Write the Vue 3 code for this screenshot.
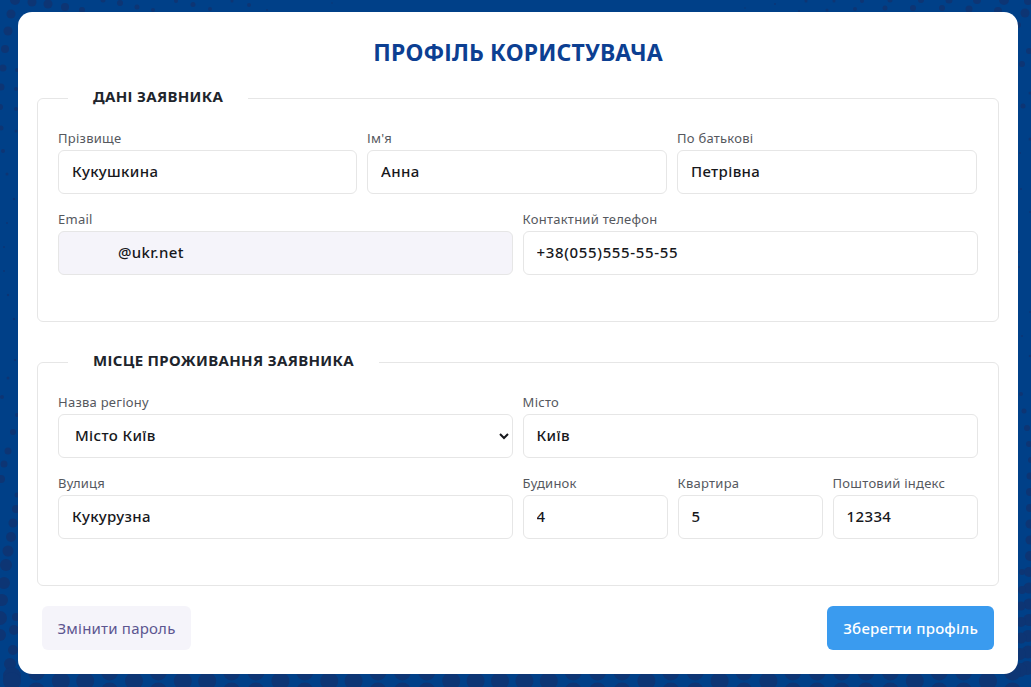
<script setup>
const raw = [
  // top left
  [15,0,5],[32,2,4.5],[48,4,4.5],[65,7,4],[82,10,3],[103,0,2.5],[120,3,3],[137,7,2.5],[153,10,2],[176,1,2],[193,4.5,2.5],[210,9,2],[232,1,1.5],[249,5,2],[267,10,1],[332,3,0.8],
  // top right
  [745,8,0.8],[775,4,1],[806,1,1.5],[834,1,1.5],[799,11,1],[827,10,1.5],[862,1,2],[855,9,2],[885,8,2.5],[890,0,2.5],[913,8,3],[921,0,3],[942,8,3],[949,0,3.5],[969,9,3.5],[977,0,4],[998,11,4],[1004,0,5],[1025,13,4.5],[1028,1,4],
  // left column
  [11,14,4.5],[8,31,4.5],[5,49,4],[3,68,3.5],[1,87,3.5],[0,107,3],[1,128,2.5],[3,151,2],[7,174,1.5],[14,199,1.2],[7,223,1],[4,247,1],[4,271,1],[8,295,1.2],[14,319,1.2],
  [17,70,2],[16,89,2],[16,109,2],[16,131,1.5],
  [15,360,1.2],[8,378,1.5],[2,397,2],[17,415,2],[13,432,3],[8,451,3.5],[4,464,3.5],[1,479,4],[17,495,2.5],[16,509,4],[13,523,4.5],[11,537,5],[8,551,5.5],[6,565,6],[4,583,6],[2,600,6],[0,618,7],[0,635,6],[16,617,4],[14,630,5],[13,650,5],[10,664,6],[12,676,9],
  // right column
  [1018,25,3],[1029,51,3],[1022,64,3],[1030,93,1.5],[1023,106,2.5],[1030,139,1.5],[1020,153,1],[1021,189,1],[1030,212,1],[1019,252,1],[1019,267,1],[1030,312,1],[1022,336,1],
  [1030,356,1.2],[1021,394,2],[1024,411,2.5],[1027,428,3],[1029,444,3],[1031,460,3],[1030,476,3.5],[1030,492,4],[1030,508,4],[1030,524,4.5],[1030,540,4.5],[1030,556,5],[1029,572,5],[1029,588,5.5],[1029,604,5.5],[1029,620,6],[1028,636,6],[1028,652,6.5],[1027,668,7],
  [1022,572,3],[1022,590,4],[1021,606,4.5],[1021,622,5],[1021,638,5.5],[1020,654,6],[1020,670,7],
]

// The band under the card: a lattice where each step is either one dot or a pair above and below
const solid = [12,58,83,132,180,203,278,327,352,448,473,497,523,546,643,713,761,806,853,919,983]
const band = []
for (let k = 0; k < 42; k++) {
  const x = 12 + 24.4 * k
  if (solid.some((s) => Math.abs(s - x) < 9)) band.push([x, 681, 9])
  else band.push([x, 672, 8.5], [x, 691, 8.5])
}
const dots = [...raw, ...band]

const personal = [
  { label: 'Прізвище', value: 'Кукушкина' },
  { label: "Ім'я", value: 'Анна' },
  { label: 'По батькові', value: 'Петрівна' },
]
const buildingFields = [
  { label: 'Будинок', value: '4' },
  { label: 'Квартира', value: '5' },
  { label: 'Поштовий індекс', value: '12334' },
]
</script>

<template>
  <div class="page">
    <svg class="backdrop" width="1031" height="687" viewBox="0 0 1031 687" aria-hidden="true">
      <circle v-for="(d, i) in dots" :key="i" :cx="d[0]" :cy="d[1]" :r="d[2]" fill="#0d3574" />
    </svg>

    <main class="card">
      <h1 class="title">ПРОФІЛЬ КОРИСТУВАЧА</h1>

      <fieldset class="group">
        <legend class="legend">ДАНІ ЗАЯВНИКА</legend>
        <div class="row three">
          <label v-for="f in personal" :key="f.label" class="field">
            <span class="caption">{{ f.label }}</span>
            <input class="control" type="text" :value="f.value" />
          </label>
        </div>
        <div class="row two">
          <label class="field">
            <span class="caption">Email</span>
            <input class="control readonly" type="text" value="@ukr.net" readonly />
          </label>
          <label class="field">
            <span class="caption">Контактний телефон</span>
            <input class="control phone" type="text" value="+38(055)555-55-55" />
          </label>
        </div>
      </fieldset>

      <fieldset class="group second">
        <legend class="legend">МІСЦЕ ПРОЖИВАННЯ ЗАЯВНИКА</legend>
        <div class="row two">
          <label class="field">
            <span class="caption">Назва регіону</span>
            <select class="control picker">
              <option>Місто Київ</option>
            </select>
          </label>
          <label class="field">
            <span class="caption">Місто</span>
            <input class="control" type="text" value="Київ" />
          </label>
        </div>
        <div class="row two">
          <label class="field">
            <span class="caption">Вулиця</span>
            <input class="control" type="text" value="Кукурузна" />
          </label>
          <div class="row split inner">
            <label v-for="f in buildingFields" :key="f.label" class="field">
              <span class="caption">{{ f.label }}</span>
              <input class="control" type="text" :value="f.value" />
            </label>
          </div>
        </div>
      </fieldset>

      <div class="actions">
        <button class="btn ghost" type="button">Змінити пароль</button>
        <button class="btn primary" type="button">Зберегти профіль</button>
      </div>
    </main>
  </div>
</template>

<style>
html, body { margin: 0; background: #004088; }
</style>

<style scoped>
.page {
  position: relative;
  width: 1031px;
  height: 687px;
  overflow: hidden;
  background: #004088;
  padding: 12px 13px 13px 18px;
  box-sizing: border-box;
  font-family: "Noto Sans", "Liberation Sans", sans-serif;
}
.backdrop { position: absolute; inset: 0; }
.card {
  position: relative;
  height: 662px;
  box-sizing: border-box;
  background: #fff;
  border-radius: 14px;
  padding: 26px 19px 0;
}
.title {
  margin: 0 0 19px;
  text-align: center;
  font-size: 23px;
  line-height: 28px;
  padding-bottom: 2px;
  font-weight: 700;
  letter-spacing: 0.15px;
  color: #0c3f92;
}
.group {
  margin: 0;
  padding: 0 20px;
  height: 235px;
  box-sizing: border-box;
  border: 1px solid #e6e6e6;
  border-radius: 6px;
  min-width: 0;
}
.second { margin-top: 29px; }
.legend {
  margin-left: 10px;
  padding: 0 25px 4px;
  font-size: 15px;
  line-height: 18px;
  font-weight: 700;
  letter-spacing: 0.33px;
  color: #20242c;
}
.row { display: grid; gap: 10px; }
.row + .row { margin-top: 16px; }
.group > .row:first-of-type { margin-top: 20px; }
.three { grid-template-columns: 299px 300px 300px; }
.split { grid-template-columns: repeat(3, 1fr); }
.two { grid-template-columns: 454.6px 455px; }
.inner { margin: 0 !important; }
.field { display: flex; flex-direction: column; min-width: 0; }
.caption {
  font-size: 13px;
  line-height: 18px;
  margin-bottom: 3px;
  letter-spacing: 0.25px;
  color: #55585e;
}
.control {
  height: 44px;
  width: 100%;
  box-sizing: border-box;
  border: 1px solid #e6e6e6;
  border-radius: 6px;
  padding: 0 13px 2px;
  background: #fff;
  font: 500 15px "Noto Sans", "Liberation Sans", sans-serif;
  letter-spacing: 0.35px;
  color: #17181c;
  outline: none;
}
.readonly { background: #f5f4fa; padding-left: 59px; }
.phone { letter-spacing: 0.65px; }
.picker { padding-left: 12px; }
.actions {
  display: flex;
  justify-content: space-between;
  padding: 20px 5px 0;
}
.btn {
  height: 44px;
  border: 0;
  border-radius: 6px;
  padding: 0 16px;
  font: 500 15px "Noto Sans", "Liberation Sans", sans-serif;
  letter-spacing: 0.2px;
  cursor: pointer;
}
.ghost { font-weight: 400; letter-spacing: 0.2px; padding: 0 15.5px; background: #f5f4fa; color: #5c5690; }
.primary { background: #3a9bef; color: #fff; }
</style>
